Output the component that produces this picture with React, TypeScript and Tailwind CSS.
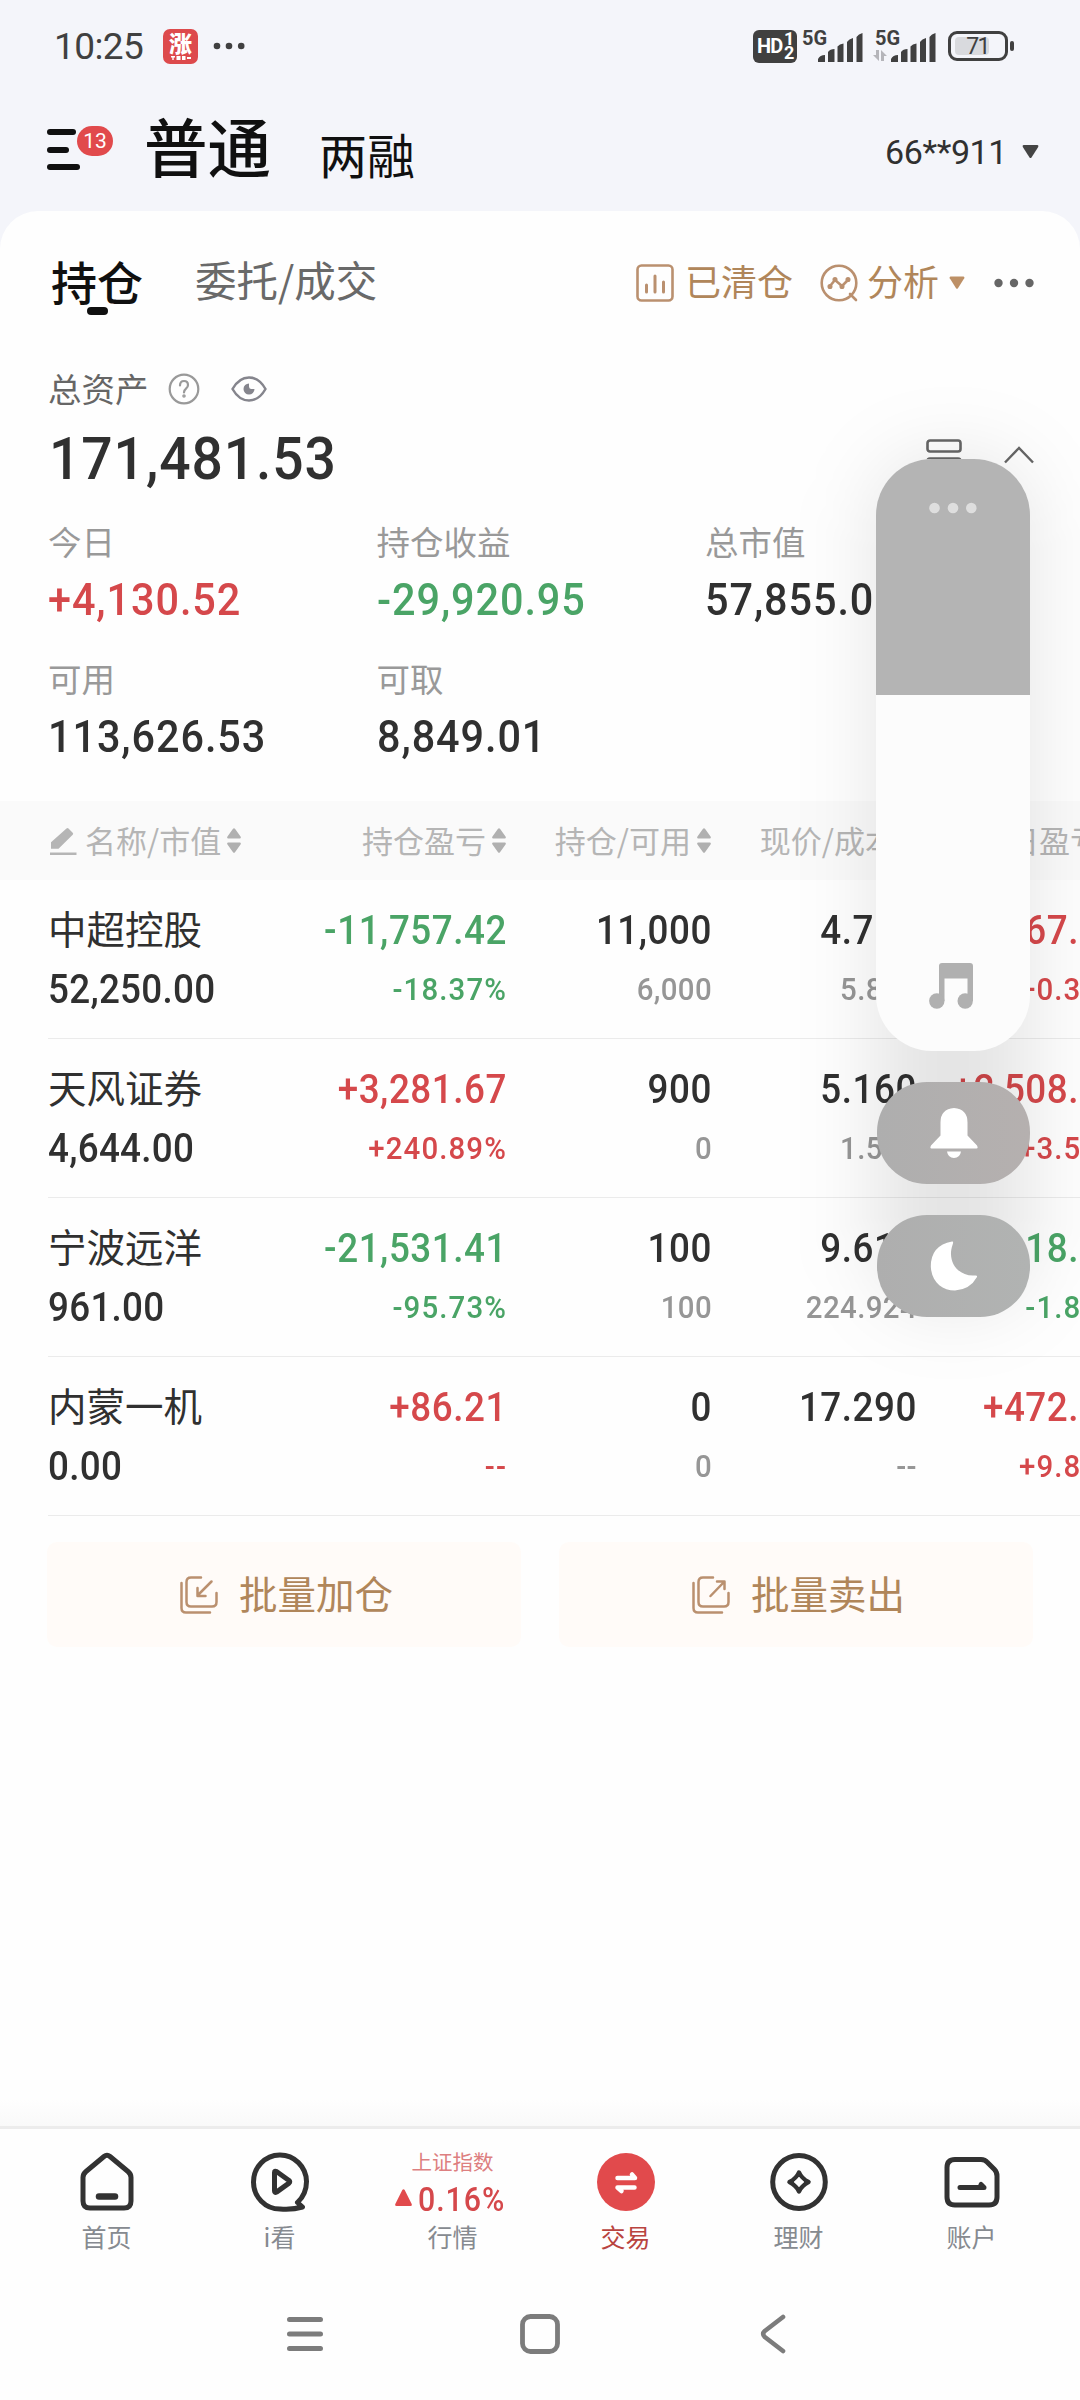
import type { ReactNode } from "react";

const RED = "text-[#d5484b]";
const GREEN = "text-[#4aa466]";
const DARK = "text-[#303030]";
const GRAY = "text-[#969696]";

/** Figures in a slightly condensed face. */
function Num({ children, right, className = "" }: { children: ReactNode; right?: boolean; className?: string }) {
  return (
    <span
      className={`block whitespace-nowrap font-[Roboto,sans-serif] font-medium leading-none ${
        right ? "-mr-[1px] origin-right" : "origin-left"
      } scale-x-[0.92] ${className}`}
    >
      {children}
    </span>
  );
}

function Signal() {
  return (
    <svg width="45" height="30" viewBox="0 0 45 30" fill="#404040">
      <path d="M0 29v-3q2-4 7-4v7zM10 29V19q2-3 6.500-3v13zM19.500 29V13.500q2-2.500 6-3V29zM29 29V9q2-3 6-4v24zM38.500 29V4q2-3 6-4v29z" />
    </svg>
  );
}

function StatusBar() {
  return (
    <div className="flex h-[92px] items-center pl-[54px] pr-[66px] text-[#404040]">
      <span className="w-[90px] whitespace-nowrap font-[Roboto,sans-serif] text-[37px] font-[450] leading-none tracking-[-0.6px]">10:25</span>
      <div className="ml-[19px] flex h-[35px] w-[35px] flex-col items-center rounded-[7px] bg-[#dd4a4c] text-white">
        <span className="mt-[1px] text-[23px] font-black leading-[24px]">涨</span>
        <svg width="20" height="4" viewBox="0 0 20 4" fill="#fff" className="mt-[2px]">
          <path d="M0 0h4v1.500H2.700V4H1.300V1.500H0zM5.500 0h4v4h-4zM11 0h3.500v4H11zM16 1h4v2h-4z" />
        </svg>
      </div>
      <svg width="32" height="8" viewBox="0 0 32 8" fill="#404040" className="ml-[15px]">
        <circle cx="4" cy="4" r="3.300" />
        <circle cx="16" cy="4" r="3.300" />
        <circle cx="28.200" cy="4" r="3.300" />
      </svg>
      <div className="ml-auto flex h-[33px] w-[44px] items-center rounded-[6px] bg-[#404040] pl-[4px] text-white">
        <span className="w-[27px] font-[Roboto,sans-serif] text-[20px] font-bold leading-none tracking-[-0.8px]">HD</span>
        <span className="flex flex-col font-[Roboto,sans-serif] text-[18px] font-bold leading-[14px]">
          <span>1</span>
          <span>2</span>
        </span>
      </div>
      <div className="ml-[5px] flex h-[33px]">
        <span className="w-[16px] whitespace-nowrap font-[Roboto,sans-serif] text-[20px] font-bold leading-[17px]">5G</span>
        <span className="pt-[3px]"><Signal /></span>
      </div>
      <div className="ml-[10px] flex h-[33px]">
        <div className="flex w-[18px] flex-col">
          <span className="whitespace-nowrap pl-[2px] font-[Roboto,sans-serif] text-[20px] font-bold leading-[17px]">5G</span>
          <svg width="14" height="11" viewBox="0 0 14 11" fill="#b5b5ba" className="mt-[3px]">
            <path d="M3 0h3v11L0 5h3zM8 0l6 6h-3v5H8z" />
          </svg>
        </div>
        <span className="pt-[3px]"><Signal /></span>
      </div>
      <div className="ml-[12px] flex items-center gap-[2px]">
        <div className="flex h-[30px] w-[60px] items-center rounded-[9px] border-[3px] border-[#404040] p-[4px]">
          <div className="flex h-[18px] w-[34px] items-center justify-end rounded-[4px] bg-[#d9dade]">
            <span className="font-[Roboto,sans-serif] text-[23px] leading-none tracking-[-1.5px]">71</span>
          </div>
        </div>
        <div className="h-[10px] w-[4px] rounded-[2px] bg-[#404040]" />
      </div>
    </div>
  );
}

function Header() {
  return (
    <div className="flex h-[119px] text-[#101010]">
      <div className="relative ml-[47px] mt-[37px] flex h-[41px] w-[97px] flex-col gap-[11.500px]">
        <div className="h-[6px] w-[29px] rounded-full bg-[#101010]" />
        <div className="h-[6px] w-[22px] rounded-full bg-[#101010]" />
        <div className="h-[6px] w-[33px] rounded-full bg-[#101010]" />
        <div className="absolute left-[30px] top-[-3px] flex h-[30px] w-[36px] items-center justify-center rounded-full bg-[#e14a4c] pt-[1px] font-[Roboto,sans-serif] text-[21px] leading-none text-white">
          13
        </div>
      </div>
      <span className="mt-[20px] w-[175px] text-[63.500px] font-medium leading-[64px]">普通</span>
      <span className="mt-[33px] text-[48px] leading-[56px]">两融</span>
      <div className="ml-auto mr-[41px] mt-[47px] flex h-[26px] items-center text-[#303030]">
        <span className="w-[119px] whitespace-nowrap font-[Roboto,sans-serif] text-[34px] font-[450] leading-none tracking-[-0.4px]">66**911</span>
        <svg width="17" height="14" viewBox="0 0 17 14" fill="#444" className="ml-[18px]">
          <path d="M1.500 0h14q1.500 .5 .7 2L9.500 12.500q-1 1.200-2 0L.8 2Q0 .5 1.500 0z" />
        </svg>
      </div>
    </div>
  );
}

function Tabs() {
  return (
    <div className="flex h-[144px] items-center">
      <div className="relative ml-[51px] w-[144px] text-[46px] font-medium leading-none text-[#101010]">
        <span className="block pb-[7px]">持仓</span>
        <div className="absolute left-[36px] top-[50px] h-[8px] w-[21px] rounded-full bg-[#101010]" />
      </div>
      <span className="pb-[6px] text-[41.500px] leading-none text-[#696969]">委托/成交</span>
      <div className="ml-auto mr-[46px] flex items-center text-[36px] leading-none text-[#b0865a]">
        <svg width="38" height="38" viewBox="0 0 38 38" fill="none" stroke="#ba906f" strokeWidth="2.600" strokeLinecap="round">
          <rect x="1.500" y="1.500" width="35" height="35" rx="4" />
          <path d="M10.500 21v7M19 12v16M27.500 18v10" strokeWidth="3" />
        </svg>
        <span className="ml-[11px] pb-[6px]">已清仓</span>
        <svg width="38" height="38" viewBox="0 0 38 38" fill="none" stroke="#ba906f" strokeWidth="2.600" strokeLinecap="round" className="ml-[27px]">
          <circle cx="19" cy="19" r="17.300" />
          <path d="M30 30l6 6M10 22l5-6 7 6 6-6" />
          <g fill="#ba906f" strokeWidth="1.500">
            <circle cx="10" cy="22.500" r="1.800" />
            <circle cx="15" cy="15.500" r="1.800" />
            <circle cx="22" cy="22.500" r="1.800" />
            <circle cx="28" cy="15.500" r="1.800" />
          </g>
        </svg>
        <span className="ml-[9px] pb-[6px]">分析</span>
        <svg width="16" height="14" viewBox="0 0 17 14" fill="#bd9066" className="ml-[10px]">
          <path d="M1.500 0h14q1.500 .5 .7 2L9.500 12.500q-1 1.200-2 0L.8 2Q0 .5 1.500 0z" />
        </svg>
        <svg width="40" height="10" viewBox="0 0 40 10" fill="#666" className="ml-[29px]">
          <circle cx="4.500" cy="5" r="4.200" />
          <circle cx="20" cy="5" r="4.200" />
          <circle cx="35.500" cy="5" r="4.200" />
        </svg>
      </div>
    </div>
  );
}

function Stat({ label, value, color = DARK }: { label: string; value: string; color?: string }) {
  return (
    <div className="h-[137px] w-[328.500px]">
      <div className="-mt-[2px] text-[33.500px] leading-[48px] text-[#999]">{label}</div>
      <Num className={`mt-[12px] text-[45px] tracking-[1px] ${color}`}>{value}</Num>
    </div>
  );
}

function Summary() {
  return (
    <div className="h-[446px] pl-[48px]">
      <div className="flex h-[68px] items-center text-[33.500px] leading-none text-[#666]">
        <span className="w-[101px] whitespace-nowrap pb-[3px]">总资产</span>
        <svg width="32" height="32" viewBox="0 0 32 32" fill="none" stroke="#999" strokeWidth="2.200" strokeLinecap="round" className="ml-[19px]">
          <circle cx="16" cy="16" r="14.300" />
          <path d="M12 12.500q0-4.500 4-4.500t4 4q0 2-2 3.700t-2 3.800" />
          <circle cx="16" cy="23" r=".7" fill="#999" />
        </svg>
        <svg width="36" height="26" viewBox="0 0 36 26" fill="none" stroke="#85858d" strokeWidth="2.500" strokeLinejoin="round" className="ml-[31px]">
          <path d="M1.500 13Q8 1.500 18 1.500T34.500 13Q28 24.500 18 24.500T1.500 13z" />
          <path d="M18 7.500a5.500 5.500 0 1 0 5.500 5.500h-3.500q-2-.5-2-2.500z" fill="#85858d" stroke="none" />
        </svg>
      </div>
      <div className="flex h-[96px]">
        <Num className={`ml-[1px] mt-[6px] text-[60px] tracking-[1px] ${DARK}`}>171,481.53</Num>
        <svg width="36" height="26" viewBox="0 0 36 26" fill="none" stroke="#666" strokeWidth="2.600" className="ml-auto mt-[16px]">
          <rect x="1.500" y="1.500" width="33" height="11" rx="2.500" />
          <rect x="1.500" y="19.500" width="33" height="11" rx="2.500" />
        </svg>
        <svg width="30" height="18" viewBox="0 0 30 18" fill="none" stroke="#666" strokeWidth="2.400" className="ml-[42px] mr-[46px] mt-[23px]">
          <path d="M1 16.500L15 2l14 14.500" />
        </svg>
      </div>
      <div className="flex w-[1032px] flex-wrap">
        <Stat label="今日" value="+4,130.52" color={RED} />
        <Stat label="持仓收益" value="-29,920.95" color={GREEN} />
        <Stat label="总市值" value="57,855.00" />
        <Stat label="可用" value="113,626.53" />
        <Stat label="可取" value="8,849.01" />
      </div>
    </div>
  );
}

function HeadCell({ children, className = "" }: { children: ReactNode; className?: string }) {
  return (
    <div className={`flex shrink-0 items-center gap-[6px] whitespace-nowrap ${className}`}>
      <span className="pb-[3px]">{children}</span>
      <svg width="14" height="25" viewBox="0 0 14 25" fill="#b0b0b0" className="shrink-0">
        <path d="M6 .8q1-1.200 2 0l5.700 8q.6 1.700-1 1.700H1.300q-1.600 0-1-1.700zM6 24.200q1 1.200 2 0l5.700-8q.6-1.700-1-1.700H1.300q-1.600 0-1 1.700z" />
      </svg>
    </div>
  );
}

const rows = [
  { name: "中超控股", cells: [["52,250.00", ""], ["-11,757.42", "-18.37%"], ["11,000", "6,000"], ["4.750", "5.819"], ["+167.20", "+0.32%"]], pl: GREEN, day: RED },
  { name: "天风证券", cells: [["4,644.00", ""], ["+3,281.67", "+240.89%"], ["900", "0"], ["5.160", "1.514"], ["+2,508.00", "+3.51%"]], pl: RED, day: RED },
  { name: "宁波远洋", cells: [["961.00", ""], ["-21,531.41", "-95.73%"], ["100", "100"], ["9.610", "224.924"], ["-18.00", "-1.84%"]], pl: GREEN, day: GREEN },
  { name: "内蒙一机", cells: [["0.00", ""], ["+86.21", "--"], ["0", "0"], ["17.290", "--"], ["+472.50", "+9.84%"]], pl: RED, day: RED },
];

function Cell({ top, bottom, color, sub, className }: { top: string; bottom: string; color: string; sub: string; className: string }) {
  return (
    <div className={`shrink-0 ${className}`}>
      <Num right className={`mt-[31px] text-right text-[40px] tracking-[0.600px] ${color}`}>{top}</Num>
      <Num right className={`mt-[22px] text-right text-[32px] ${sub === GRAY ? "tracking-[0.400px]" : "tracking-[1.200px]"} ${sub}`}>{bottom}</Num>
    </div>
  );
}

function Holdings() {
  return (
    <div>
      <div className="flex h-[79px] items-center overflow-hidden bg-[#fafafa] pl-[50px] text-[31px] leading-none text-[#b5b5b5]">
        <svg width="27" height="28" viewBox="0 0 27 28" fill="#b5b5b5" className="mr-[8px] shrink-0">
          <path d="M16.500 1.500q1-1 2 0l4.200 4.200q1 1 0 2L8.500 21.800H1v-6.500zM0 25.500h26.500V28H0z" />
        </svg>
        <HeadCell className="w-[155px]">名称/市值</HeadCell>
        <HeadCell className="w-[266px] justify-end">持仓盈亏</HeadCell>
        <HeadCell className="w-[205px] justify-end">持仓/可用</HeadCell>
        <HeadCell className="w-[205px] justify-end">现价/成本</HeadCell>
        <HeadCell className="w-[205px] justify-end">当日盈亏</HeadCell>
      </div>
      {rows.map((r) => (
        <div key={r.name} className="ml-[48px] flex h-[159px] overflow-hidden border-b border-[#ebebeb]">
          <div className="w-[200px] shrink-0">
            <div className={`mt-[23px] whitespace-nowrap text-[38.500px] leading-[48px] ${DARK}`}>{r.name}</div>
            <Num className={`mt-[19px] text-[40px] tracking-[0.300px] ${DARK}`}>{r.cells[0][0]}</Num>
          </div>
          <Cell className="w-[258px]" top={r.cells[1][0]} bottom={r.cells[1][1]} color={r.pl} sub={r.pl} />
          <Cell className="w-[205px]" top={r.cells[2][0]} bottom={r.cells[2][1]} color={DARK} sub={GRAY} />
          <Cell className="w-[205px]" top={r.cells[3][0]} bottom={r.cells[3][1]} color={DARK} sub={GRAY} />
          <Cell className="w-[205px]" top={r.cells[4][0]} bottom={r.cells[4][1]} color={r.day} sub={r.day} />
        </div>
      ))}
    </div>
  );
}

function BatchButton({ label, arrow }: { label: string; arrow: string }) {
  return (
    <div className="flex h-[105px] w-[474px] items-center rounded-[10px] bg-[#fffbf8] pl-[133px] text-[38.500px] leading-none text-[#b0865a]">
      <svg width="38" height="38" viewBox="0 0 38 38" fill="none" stroke="#ba906f" strokeWidth="2.500" strokeLinecap="round" strokeLinejoin="round">
        <path d="M21 1.500H11q-4.500 0-4.500 4.500v20q0 4.500 4.500 4.500h21q4.500 0 4.500-4.500V17M1.500 7v25q0 4.500 4.500 4.500h24" />
        <path d={arrow} />
      </svg>
      <span className="ml-[21px] pb-[5px]">{label}</span>
    </div>
  );
}

function NavItem({ label, icon, active }: { label: string; icon: ReactNode; active?: boolean }) {
  return (
    <div className="flex w-[173px] flex-col items-center">
      <div className="flex h-[83px] items-end justify-center">{icon}</div>
      <span className={`mt-[10px] text-[25px] leading-[28px] ${active ? "text-[#b94440]" : "text-[#868a90]"}`}>{label}</span>
    </div>
  );
}

function BottomNav() {
  const line = { fill: "none", stroke: "#323232", strokeWidth: 5, strokeLinecap: "round" as const, strokeLinejoin: "round" as const };
  return (
    <div className="flex h-[136px] border-t-[3px] border-[#ececec] bg-[#fefefe] pl-[20px]">
      <NavItem
        label="首页"
        icon={
          <svg width="58" height="60" viewBox="0 0 58 60" {...line}>
            <path d="M26 4.500q3-2.500 6 0L50 19.500q3 2.500 3 6V49q0 7-7 7H12q-7 0-7-7V25.500q0-3.500 3-6z" />
            <path d="M21 44.500h16" strokeWidth="6.500" />
          </svg>
        }
      />
      <NavItem
        label="i看"
        icon={
          <svg width="58" height="60" viewBox="0 0 58 60" {...line}>
            <path d="M46.500 50.500Q55.500 42 55.500 29.500A26.500 27 0 1 0 29 57q12.500 1 22.500-2z" />
            <path d="M23.500 20.500q0-2 2-1l12.500 9q1.500 1.300 0 2.600l-12.500 9q-2 1-2-1z" />
          </svg>
        }
      />
      <NavItem
        label="行情"
        icon={
          <div className="flex h-[83px] flex-col items-center text-[#d5484b]">
            <span className="mt-[19px] text-[20.500px] leading-[26px] text-[#dd7f80]">上证指数</span>
            <div className="mt-[9px] flex items-center">
              <svg width="17" height="17" viewBox="0 0 17 17" fill="#e14a4c" className="mb-[5px] mr-[6px]">
                <path d="M7.300 1q1.200-1.500 2.400 0l7 14q.6 2-1.200 2h-14q-1.800 0-1.200-2z" />
              </svg>
              <Num className="-mr-[3px] text-[33px] tracking-[1px]">0.16%</Num>
            </div>
          </div>
        }
      />
      <NavItem
        label="交易"
        active
        icon={
          <svg width="58" height="60" viewBox="0 0 58 60">
            <ellipse cx="29" cy="30" rx="29" ry="29" fill="#e14a4c" />
            <path d="M20.500 26H38L35 22.500M37.500 35.500H20.500l4 3.500" fill="none" stroke="#fff" strokeWidth="4.500" strokeLinecap="round" strokeLinejoin="round" />
          </svg>
        }
      />
      <NavItem
        label="理财"
        icon={
          <svg width="58" height="60" viewBox="0 0 58 60" {...line}>
            <ellipse cx="29" cy="30" rx="26.300" ry="26.500" />
            <path d="M29 20.500q2.500 6 9.500 9.500q-7 3.500-9.500 9.500q-2.500-6-9.500-9.500q7-3.500 9.500-9.500z" strokeWidth="4.500" />
            <path d="M29 25l5 5-5 5-5-5z" fill="#fefefe" stroke="none" />
          </svg>
        }
      />
      <NavItem
        label="账户"
        icon={
          <svg width="58" height="60" viewBox="0 0 58 60" {...line}>
            <path d="M12 7.500h26q4 0 6.500 3l7 7q2.500 2.500 2.500 6.500v21q0 8-8 8H12q-8 0-8-8V15.500q0-8 8-8z" />
            <path d="M17 35.500h24L38 32.500" />
          </svg>
        }
      />
    </div>
  );
}

function SystemNav() {
  return (
    <div className="flex h-[138px] items-start bg-[#fefefe] pt-[50px]">
      <svg width="40" height="44" viewBox="0 0 40 44" stroke="#7c7c7c" strokeWidth="5" strokeLinecap="round" className="ml-[285px]">
        <path d="M4.500 7.500h31M4.500 22h31M4.500 36.500h31" />
      </svg>
      <svg width="44" height="44" viewBox="0 0 44 44" fill="none" stroke="#7c7c7c" strokeWidth="4.800" className="ml-[193px]">
        <rect x="4.500" y="4.500" width="35" height="35" rx="8" />
      </svg>
      <svg width="30" height="44" viewBox="0 0 30 44" fill="none" stroke="#7c7c7c" strokeWidth="4.600" strokeLinecap="round" strokeLinejoin="round" className="ml-[198px]">
        <path d="M23 5L4.800 19q-3.300 3 0 6L23 39" />
      </svg>
    </div>
  );
}

/** System volume slider floating over the page. */
function VolumePanel() {
  return (
    <div className="absolute left-[876px] top-[459px] w-[154px]">
      <div className="absolute left-0 top-0 h-[848px] w-full rounded-[60px] bg-black/10 blur-[40px]" />
      <div className="relative flex h-[592px] flex-col items-center overflow-hidden rounded-[56px] bg-[#fcfcfc]">
        <div className="flex h-[236px] w-full justify-center bg-[#b4b4b4] pt-[43px]">
          <svg width="48" height="12" viewBox="0 0 48 12" fill="#dedede">
            <circle cx="5.500" cy="6" r="5.300" />
            <circle cx="24" cy="6" r="5.300" />
            <circle cx="42.300" cy="6" r="5.300" />
          </svg>
        </div>
        <svg width="44" height="46" viewBox="0 0 44 46" fill="#b0b0b0" className="mt-[268px] -ml-[4px]">
          <path d="M10 3q0-3 3-3h28q3 0 3 3v35H38.500V15.500H15.500V38H10z" />
          <circle cx="7.800" cy="38" r="7.700" />
          <circle cx="36.200" cy="38" r="7.700" />
        </svg>
      </div>
      <div className="relative ml-[1px] mt-[31px] flex h-[102px] w-[153px] items-center justify-center rounded-[50px] bg-gradient-to-r from-[#aeaeae] to-[#b5b0af]">
        <svg width="48" height="52" viewBox="0 0 48 52" fill="#fff">
          <path d="M24 1Q37.500 2 37.500 15.500v13L47 38.500q1.500 3-.5 3H1.500q-2 0-.5-3l9.500-10v-13Q10.500 2 24 1zM17 44.500h14q-1 6.500-7 6.500t-7-6.500z" />
        </svg>
      </div>
      <div className="relative ml-[1px] mt-[31px] flex h-[102px] w-[153px] items-center justify-center rounded-[50px] bg-gradient-to-r from-[#aeaeae] to-[#b1b3b2]">
        <svg width="48" height="50" viewBox="0 0 48 50" fill="#fff">
          <path d="M22 .5Q.8 4.500 .8 25.500C1.500 41 12 49.500 25 49.500q15-1 22-13.500 .3-2-2-1.500C29 36 16.500 21 22.500 4q1.500-4-.5-3.500z" />
        </svg>
      </div>
    </div>
  );
}

export default function App() {
  return (
    <div className="relative flex h-[2400px] w-[1080px] flex-col overflow-hidden bg-[#f4f5fa] font-['Noto_Sans_CJK_SC',sans-serif]">
      <StatusBar />
      <Header />
      <main className="flex flex-1 flex-col rounded-t-[38px] bg-[#fefefe]">
        <Tabs />
        <Summary />
        <Holdings />
        <div className="mt-[26px] flex justify-between pl-[47px] pr-[47px]">
          <BatchButton label="批量加仓" arrow="M31.500 5.500L18 19M17.500 12v8h8" />
          <BatchButton label="批量卖出" arrow="M18.500 20L32 6M25 5.500h7.500V13" />
        </div>
        <div className="mt-auto h-[26px] bg-gradient-to-b from-[#fefefe] to-[#f9f9f9]" />
      </main>
      <BottomNav />
      <SystemNav />
      <VolumePanel />
    </div>
  );
}
